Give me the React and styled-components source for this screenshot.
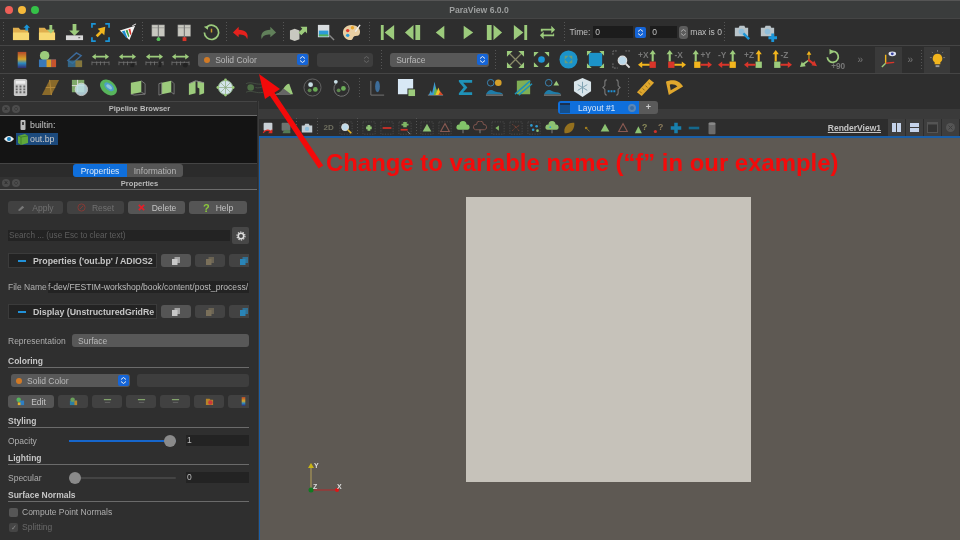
import styled, { createGlobalStyle } from 'styled-components';

const G = '#9ccb7c';
const Y = '#f2b51d';
const R = '#d9352a';
const B = '#1b95d8';

const GlobalStyle = createGlobalStyle`
  html, body { margin: 0; padding: 0; background: #2d2d2d; }
  body { font-family: "Liberation Sans", Arial, sans-serif; overflow: hidden; }
  * { box-sizing: border-box; }
`;

const Window = styled.div`
  position: relative;
  width: 960px;
  height: 540px;
  overflow: hidden;
  display: flex;
  flex-direction: column;
  background: #2d2d2d;
  filter: blur(0.35px);
`;

const TitleBar = styled.div`
  height: 18px;
  flex: none;
  display: flex;
  align-items: center;
  padding-left: 5px;
  gap: 5px;
  background: #3a3c3c;
  border-top: 1px solid #555;
`;

const Light = styled.span`
  width: 8px;
  height: 8px;
  border-radius: 50%;
  background: ${(p) => p.$c};
`;

const TitleText = styled.div`
  flex: 1;
  text-align: center;
  font-size: 8.6px;
  font-weight: 700;
  color: #9d9f9f;
  margin-right: 46px;
`;

const Toolbar = styled.div`
  height: ${(p) => p.$h || 28}px;
  flex: none;
  display: flex;
  align-items: center;
  background: #2e2e2e;
  border-top: 1px solid #454545;
`;

const Sep = styled.div`
  width: ${(p) => p.$w || 4}px;
  height: 20px;
  flex: none;
  background: ${(p) =>
    p.$dots ? 'repeating-linear-gradient(to bottom, #555 0 1px, transparent 1px 3px) center / 1px 100% no-repeat' : 'none'};
`;

const Btn = styled.div`
  width: ${(p) => p.$w || 26.65}px;
  height: ${(p) => p.$h || 26}px;
  flex: none;
  display: flex;
  align-items: center;
  justify-content: center;
  background: ${(p) => p.$bg || 'none'};
  color: #6f6f5f;
  font-size: 8px;
  font-weight: 700;
`;

const Combo = styled.div`
  width: ${(p) => p.$w}px;
  height: ${(p) => p.$h || 13}px;
  flex: none;
  display: flex;
  align-items: center;
  gap: 5px;
  margin-left: ${(p) => p.$ml || 0}px;
  padding-left: ${(p) => p.$pad || 6}px;
  padding-right: 1px;
  border-radius: 3px;
  background: ${(p) => (p.$dim ? '#3e3e3e' : '#585858')};
  color: ${(p) => (p.$dim ? '#6a6a6a' : '#b9b9b9')};
  font-size: 8.5px;
  white-space: nowrap;
  overflow: hidden;
`;

const ComboText = styled.span`
  flex: 1;
`;

const ComboArrow = styled.span`
  width: 11px;
  height: 11px;
  flex: none;
  margin-left: ${(p) => p.$ml || 0}px;
  border-radius: 2px;
  background: ${(p) => (p.$dim ? 'transparent' : '#1565d8')};
  display: flex;
  align-items: center;
  justify-content: center;
`;

const Dot = styled.span`
  width: 6px;
  height: 6px;
  flex: none;
  border-radius: 50%;
  background: #d27a25;
`;

const TimeLabel = styled.span`
  font-size: 8.5px;
  color: #c0c0c0;
  white-space: nowrap;
`;

const NumInput = styled.div`
  width: ${(p) => p.$w}px;
  height: 12px;
  flex: none;
  margin-left: ${(p) => p.$ml || 0}px;
  padding-left: 2px;
  background: #1c1c1c;
  color: #c0c0c0;
  font-size: 8.5px;
  line-height: 12px;
`;

const Stepper = styled.span`
  width: 9px;
  height: 13px;
  flex: none;
  margin: 0 2px;
  border-radius: 3px;
  background: #5d5d5d;
  display: flex;
  align-items: center;
  justify-content: center;
`;

const Chevrons = styled.span`
  color: #777;
  font-size: 10px;
  width: ${(p) => p.$w}px;
  flex: none;
  text-align: center;
`;

const Main = styled.div`
  flex: 1;
  min-height: 0;
  display: flex;
`;

const LeftPanel = styled.div`
  width: 257px;
  flex: none;
  display: flex;
  flex-direction: column;
  background: #2f2f2f;
  border-top: 1px solid #454545;
`;

const DockTitle = styled.div`
  height: ${(p) => p.$h || 14}px;
  flex: none;
  display: flex;
  align-items: center;
  padding-left: 2px;
  gap: 2px;
  background: #323232;
  border-bottom: 1px solid #6c6c6c;
`;

const DockDot = styled.span`
  width: 8px;
  height: 8px;
  flex: none;
  border-radius: 50%;
  background: #4c4c4c;
  color: #222;
  font-size: 7px;
  line-height: 8px;
  text-align: center;
`;

const DockLabel = styled.span`
  flex: 1;
  text-align: center;
  color: #b9b9b9;
  font-size: 7.6px;
  font-weight: 700;
`;

const Pipeline = styled.div`
  height: 47px;
  flex: none;
  background: #141414;
  display: flex;
  flex-direction: column;
  padding: 2px 0 0 4px;
  gap: 1px;
`;

const TreeRow = styled.div`
  height: 13px;
  display: flex;
  align-items: center;
  color: #c8c8c8;
  font-size: 8.8px;
`;

const TreeEye = styled.span`
  width: 12px;
  height: 12px;
  flex: none;
  display: flex;
  align-items: center;
`;

const TreeItem = styled.span`
  height: 12px;
  display: flex;
  align-items: center;
  gap: 1px;
  padding: 0 4px 0 1px;
  background: ${(p) => (p.$selected ? '#1c4a7d' : 'none')};
`;

const Tabs = styled.div`
  height: 14px;
  flex: none;
  display: flex;
  padding-left: 73px;
  background: #2b2b2b;
  border-top: 1px solid #444;
`;

const Tab = styled.div`
  width: ${(p) => p.$w}px;
  height: 13px;
  display: flex;
  align-items: center;
  justify-content: center;
  font-size: 8.5px;
  color: ${(p) => (p.$on ? '#dce9f8' : '#b5b5b5')};
  background: ${(p) => (p.$on ? '#0f6fdc' : '#565656')};
  border-radius: ${(p) => (p.$on ? '3px 0 0 3px' : '0 3px 3px 0')};
`;

const Body = styled.div`
  flex: 1;
  min-height: 0;
  padding: 11px 8px 0;
  overflow: hidden;
`;

const Line = styled.div`
  display: flex;
  align-items: center;
  gap: ${(p) => p.$gap ?? 4}px;
  height: ${(p) => p.$h || 13}px;
  margin-top: ${(p) => p.$mt || 0}px;
  width: 241px;
  overflow: hidden;
  flex: none;
  font-size: 8.5px;
  color: #aeaeae;
  white-space: nowrap;
`;

const PushBtn = styled.div`
  width: ${(p) => p.$w}px;
  height: 13px;
  flex: none;
  display: flex;
  align-items: center;
  justify-content: center;
  gap: 6px;
  border-radius: 3px;
  background: ${(p) => (p.$on ? '#555' : '#414141')};
  color: ${(p) => (p.$on ? '#c4c4c4' : '#717171')};
  font-size: 8.5px;
`;

const HelpMark = styled.span`
  color: #8cc83c;
  font-weight: 700;
  font-size: 11px;
`;

const SearchBox = styled.div`
  width: 222px;
  height: 11px;
  flex: none;
  background: #232323;
  color: #5e5e5e;
  font-size: 8.2px;
  line-height: 11px;
  padding-left: 1px;
`;

const GearBtn = styled.div`
  width: 17px;
  height: 17px;
  flex: none;
  margin-left: 2px;
  background: #474747;
  border-radius: 2px;
  display: flex;
  align-items: center;
  justify-content: center;
`;

const SectionBox = styled.div`
  width: 149px;
  height: 15px;
  flex: none;
  display: flex;
  align-items: center;
  gap: 7px;
  padding-left: 9px;
  background: #232323;
  border: 1px solid #3b3b3b;
  color: #c6c6c6;
  font-size: 8.8px;
  font-weight: 700;
  overflow: hidden;
`;

const Minus = styled.span`
  width: 8px;
  height: 2px;
  flex: none;
  background: #2191d8;
`;

const SectionBtn = styled.div`
  width: 30px;
  height: 13px;
  flex: none;
  border-radius: 3px;
  background: ${(p) => (p.$on ? '#555' : '#434343')};
  display: flex;
  align-items: center;
  justify-content: center;
`;

const FileInput = styled.div`
  flex: 1;
  min-width: 0;
  height: 12px;
  background: #232323;
  color: #bdbdbd;
  font-size: 8.6px;
  line-height: 12px;
  overflow: hidden;
`;

const GroupTitle = styled.div`
  width: 241px;
  height: ${(p) => p.$h || 11}px;
  margin-top: ${(p) => p.$mt || 0}px;
  border-bottom: 1px solid #6b6b6b;
  color: #c6c6c6;
  font-size: 8.5px;
  font-weight: 700;
  line-height: ${(p) => (p.$h || 11) - 2}px;
`;

const PropLabel = styled.span`
  width: ${(p) => p.$w || 61}px;
  flex: none;
`;

const SliderTrack = styled.div`
  position: relative;
  width: 107px;
  height: 2px;
  flex: none;
  background: #444;
  border-radius: 1px;
`;

const SliderFill = styled.div`
  height: 100%;
  background: #1666cc;
`;

const SliderThumb = styled.span`
  position: absolute;
  top: -5px;
  width: 12px;
  height: 12px;
  border-radius: 50%;
  background: #8a8a8a;
`;

const ValueInput = styled.div`
  width: 63px;
  height: 11px;
  flex: none;
  margin-left: 10px;
  background: #232323;
  color: #bdbdbd;
  font-size: 8.5px;
  line-height: 11px;
  padding-left: 1px;
`;

const CheckRow = styled.div`
  display: flex;
  align-items: center;
  gap: 4px;
  height: 12px;
  margin-top: ${(p) => p.$mt || 0}px;
  padding-left: 1px;
  font-size: 8.5px;
  color: ${(p) => (p.$dim ? '#696969' : '#aeaeae')};
`;

const CheckBox = styled.span`
  width: 9px;
  height: 9px;
  flex: none;
  border-radius: 2px;
  background: ${(p) => (p.$dim ? '#454545' : '#565656')};
  color: #888;
  font-size: 7px;
  line-height: 9px;
  text-align: center;
`;

const RightArea = styled.div`
  flex: 1;
  min-width: 0;
  display: flex;
  flex-direction: column;
  border-left: 1px solid #3c3c3c;
  margin-left: 1px;
`;

const TabStrip = styled.div`
  height: 18px;
  flex: none;
  padding-left: 299px;
  display: flex;
  background: linear-gradient(to bottom, #2e2e2e 0 8px, #3a3a3a 8px);
`;

const LayoutTab = styled.div`
  width: 81px;
  height: 13px;
  display: flex;
  align-items: center;
  background: #0f6fdc;
  border-radius: 3px 0 0 3px;
  color: #d5e6fa;
  font-size: 8.5px;
`;

const LayoutIcon = styled.span`
  width: 10px;
  height: 10px;
  margin: 0 8px 0 2px;
  background: #14508f;
  border-top: 2px solid #1a3050;
`;

const LayoutClose = styled.span`
  width: 8px;
  height: 8px;
  margin: 0 3px 0 auto;
  border-radius: 50%;
  border: 2px solid #5d87b5;
  background: #3a6da5;
`;

const PlusTab = styled.div`
  width: 19px;
  height: 13px;
  border-radius: 0 3px 3px 0;
  background: #5a5a5a;
  color: #ccc;
  font-size: 9px;
  font-weight: 700;
  line-height: 13px;
  text-align: center;
`;

const ViewBar = styled.div`
  height: 17px;
  flex: none;
  display: flex;
  align-items: center;
  background: #2d2d2d;
`;

const ViewName = styled.span`
  margin-left: auto;
  margin-right: 7px;
  color: #c4c4c4;
  font-size: 8.5px;
  font-weight: 700;
  text-decoration: underline;
`;

const ViewBtn = styled.div`
  width: 18px;
  height: 17px;
  flex: none;
  background: #3e3e3e;
  border-right: 1px solid #2d2d2d;
  display: flex;
  align-items: center;
  justify-content: center;
`;

const Viewport = styled.div`
  position: relative;
  flex: 1;
  min-height: 0;
  display: flex;
  align-items: center;
  justify-content: center;
  padding-right: 3px;
  background: #5e5953;
  border-top: 2px solid #1a5fa8;
  border-left: 1px solid #1a5fa8;
`;

const Plane = styled.div`
  width: 285px;
  height: 285px;
  background: #c6c2ba;
`;

const AxesMark = styled.svg`
  position: absolute;
  left: 43px;
  top: 322px;
`;

const ArrowMark = styled.svg`
  position: absolute;
  left: 0;
  top: 0;
  pointer-events: none;
`;

const Callout = styled.div`
  position: absolute;
  left: 326px;
  top: 149px;
  color: #f40a0a;
  font-size: 23.9px;
  font-weight: 700;
  white-space: nowrap;
`;

function Ic({ s = 19, box = 20, children }) {
  return (
    <svg width={s} height={s} viewBox={`0 0 ${box} ${box}`}>
      {children}
    </svg>
  );
}

function Folder({ children }) {
  return (
    <>
      <path d="M1 5h6l2 2h8v11H1z" fill="#dfae4e" />
      <path d="M1 10h17v8H1z" fill="#f7d873" />
      {children}
    </>
  );
}

function Server({ x = 3, y = 2 }) {
  return (
    <g fill="#c8c8c0" stroke="#777" strokeWidth=".5">
      <rect x={x} y={y} width="6.5" height="12" />
      <rect x={x + 7} y={y} width="6.5" height="12" />
      <path d={`M${x} ${y + 3}h6.5M${x + 7} ${y + 3}h6.5`} />
    </g>
  );
}

function Rescale({ tail }) {
  return (
    <>
      <path d="M1 7l4-3v2h10V4l4 3-4 3V8H5v2z" fill={G} />
      <path d="M1 13h18M1 12v4M6 12v4M10 12v4M14 12v4M19 12v4" stroke="#777" strokeWidth=".8" fill="none" />
      {tail}
    </>
  );
}

function Axis({ label, square, up, side, left, labelLeft }) {
  const sx = left ? 3 : 11;
  return (
    <Ic s={21}>
      <path d={`M${sx + 3} 12V5h-2l3-4 3 4h-2v7z`} transform={`translate(${left ? -2.5 : -1},0)`} fill={up} />
      <rect x={sx} y="12" width="6" height="6" fill={square} />
      {left ? (
        <path d="M9 14h7v-2l4 3-4 3v-2H9z" fill={side} />
      ) : (
        <path d="M11 14H4v-2l-4 3 4 3v-2h7z" fill={side} />
      )}
      <text x={labelLeft ? 0 : 9} y="9" fontSize="8" fill="#777" fontFamily="Liberation Sans">{label}</text>
    </Ic>
  );
}

function Box({ fill = G, wire = '#888' }) {
  return (
    <>
      <path d="M3 5l11-2v12L3 17z" fill={fill} />
      <path d="M14 3l4 3v11l-4-2M3 17l4 1 11-1" fill="none" stroke={wire} strokeWidth=".8" />
    </>
  );
}

function Updown({ c = '#eee' }) {
  return (
    <svg width="7" height="9" viewBox="0 0 7 9">
      <path d="M1 3.500l2.500-2 2.500 2M1 5.500l2.500 2 2.500-2" fill="none" stroke={c} strokeWidth="1" />
    </svg>
  );
}

const row1a = [
  <Ic><Folder><path d="M12 5l3.500-3.500L19 5h-2v3h-3V5z" fill={B} /></Folder></Ic>,
  <Ic><Folder><path d="M12 2h3v5h2.500l-4 4-4-4H12z" fill={G} /></Folder></Ic>,
  <Ic><path d="M8 1h4v7h3.500L10 13.500 4.500 8H8z" fill={G} /><rect x="1" y="13" width="18" height="5" fill="#d9d9d9" /><rect x="14" y="15" width="2" height="1" fill="#555" /></Ic>,
  <Ic><path d="M1 5V1h4M15 1h4v4M19 15v4h-4M5 19H1v-4" stroke={B} strokeWidth="1.800" fill="none" /><path d="M15 4l-1 9-2.500-2.500L7 15l-2-2 4.500-4.500L7 6z" fill={Y} /></Ic>,
  <Ic><path d="M2 8L18 3l-6 15z" fill="#f4f4f4" /><path d="M4 9l3-1 3 8-2-1z" fill="#1c8ad0" /><path d="M8 8l2-1 2 7-1 1z" fill="#3b9d45" /><path d="M11 6.500l2-.500 1 5-1 2z" fill="#d8322a" /><path d="M15 3l4-2" stroke="#eee" /></Ic>,
];

const row1b = [
  <Ic><Server /><path d="M10 14v3" stroke="#888" /><circle cx="10" cy="17" r="2" fill="#58c15a" /></Ic>,
  <Ic><Server /><path d="M10 14v3" stroke="#888" /><rect x="8" y="15" width="4" height="4" fill={R} /></Ic>,
  <Ic><path d="M6 3.500A7.500 7.500 0 1 1 2.500 10" fill="none" stroke={G} strokeWidth="1.800" /><path d="M2 4l5-1.500L6 7z" fill={G} /><path d="M10 6v4" stroke="#c99b2a" strokeWidth="1.500" /></Ic>,
];

const row1c = [
  <Ic><path d="M7 4L1 10l6 5v-3c5 0 8 1 9 5 2-6-2-10-9-10z" fill="#e5211d" /></Ic>,
  <Ic><path d="M13 4l6 6-6 5v-3c-5 0-8 1-9 5-2-6 2-10 9-10z" fill="#61805a" /></Ic>,
];

const row1d = [
  <Ic><path d="M1 8l5-2 5 2v9l-5 2-5-2z" fill="#c8c8c0" /><path d="M10 10l4-4-2-2h7v7l-2-2-4 4z" fill={G} /></Ic>,
  <Ic><rect x="2" y="2" width="12" height="13" fill="#d9dde0" /><rect x="3" y="8" width="10" height="6" fill="#2d9bd8" /><rect x="3" y="12" width="10" height="2" fill="#52b05a" /><path d="M14 13l5 5" stroke="#888" strokeWidth="1.500" /></Ic>,
  <Ic><path d="M10 2C4 2 1 6 1 10s3 8 8 8c3 0 2-3 4-4s6 1 6-5c0-4-4-7-9-7z" fill="#e9cfa2" /><circle cx="6" cy="8" r="1.800" fill="#e23b2d" /><circle cx="6" cy="13" r="1.800" fill="#2d9bd8" /><circle cx="11" cy="5" r="1.800" fill="#e8a52a" /><path d="M14 9l5-7" stroke="#eee" strokeWidth="1.500" /></Ic>,
];

const vcr = [
  'M3 2h3v16H3zM17 2v16L7 10z',
  'M10 2v16L1 10zM12 2h5v16h-5z',
  'M14 3v14L5 10z',
  'M6 3v14l10-7z',
  'M3 2h5v16H3zM10 2l9 8-9 8z',
  'M3 2l10 8-10 8zM14 2h3v16h-3z',
];

const row2a = [
  <Ic><defs><linearGradient id="cb" x1="0" y1="0" x2="0" y2="1"><stop offset="0" stopColor="#b5482a" /><stop offset=".45" stopColor="#d5a62a" /><stop offset=".7" stopColor="#2c8ac0" /><stop offset="1" stopColor="#302a70" /></linearGradient></defs><rect x="6" y="2" width="9" height="17" fill="url(#cb)" /></Ic>,
  <Ic><circle cx="7" cy="6" r="5" fill={G} /><rect x="1" y="10" width="18" height="8" fill="#3878b8" /><rect x="9" y="10" width="5" height="8" fill="#d8a02a" /><rect x="14" y="10" width="5" height="8" fill="#c7532d" /></Ic>,
  <Ic><path d="M3 11l9-8 5 3-9 8z" fill="none" stroke="#3c6a9a" strokeWidth="1.500" /><rect x="3" y="11" width="15" height="7" fill="#35729a" opacity=".8" /><rect x="11" y="11" width="7" height="7" fill="#9a7a2a" opacity=".8" /></Ic>,
  <Ic><Rescale /></Ic>,
  <Ic><Rescale tail={<path d="M13 14h4v4h-4z" fill="#222" />} /></Ic>,
  <Ic><Rescale tail={<path d="M14 12h3v6h-3z" fill="#222" />} /></Ic>,
  <Ic><Rescale tail={<circle cx="15" cy="16" r="2.500" fill="#222" />} /></Ic>,
];

const row2b = [
  <Ic><path d="M4 4l12 12M16 4L4 16" stroke="#8a8a6a" strokeWidth="1.300" /><path d="M1 1h6L1 7zM19 1v6l-6-6zM1 19v-6l6 6zM19 19h-6l6-6z" fill={G} /></Ic>,
  <Ic><circle cx="10" cy="10" r="3.500" fill={B} /><path d="M2 2h5L2 7zM18 2v5l-5-5zM2 18v-5l5 5zM18 18h-5l5-5z" fill={G} /></Ic>,
  <Ic><circle cx="10" cy="10" r="9.500" fill="#1c93c9" /><path d="M6 6h4L6 10zM14 6v4l-4-4zM6 14v-4l4 4zM14 14h-4l4-4z" fill="#6d9c78" /></Ic>,
  <Ic><rect x="3" y="3" width="14" height="14" fill="#1c93c9" /><path d="M1 1h5L1 6zM19 1v5l-5-5zM1 19v-5l5 5zM19 19h-5l5-5z" fill={G} /></Ic>,
  <Ic><path d="M1 5V1h5M14 1h5M1 14v5h5" fill="none" stroke="#777" strokeDasharray="2 1" /><circle cx="11" cy="11" r="4.500" fill="#bcd9ea" stroke="#ddd" strokeWidth="1.200" /><path d="M14.500 14.500l4 4" stroke="#ddd" strokeWidth="2" /></Ic>,
  <Axis label="+X" square={R} up={G} side={Y} labelLeft />,
  <Axis label="-X" square={R} up={G} side={Y} left />,
  <Axis label="+Y" square={Y} up={G} side={R} left />,
  <Axis label="-Y" square={Y} up={G} side={R} labelLeft />,
  <Axis label="+Z" square={G} up={Y} side={R} labelLeft />,
  <Axis label="-Z" square={G} up={Y} side={R} left />,
  <Ic><path d="M10 10V5H8l2.500-4L13 5h-2v5z" fill={Y} /><path d="M10 10l-6 4-1-2-2 6 6-1-1-2 5-4z" fill={G} /><path d="M10 9l5 4 1-2 3 6-6-1 1-1-5-4z" fill={R} /></Ic>,
  <Ic s={22}><path d="M6 2.500A5 5 0 1 1 3 7.500" fill="none" stroke={G} strokeWidth="1.600" /><path d="M5 0l4.500 2.500L5 5z" fill={G} /><text x="6.500" y="18.500" fontSize="7.500" fill="#777" fontFamily="Liberation Sans">+90</text></Ic>,
];

const row3a = [
  <Ic><rect x="3" y="1" width="14" height="18" rx="2" fill="#c9c9c9" /><rect x="5" y="3" width="10" height="3" fill="#eee" /><path d="M5 8h2v2H5zM9 8h2v2H9zM13 8h2v2h-2zM5 11h2v2H5zM9 11h2v2H9zM13 11h2v2h-2zM5 14h2v2H5zM9 14h2v2H9zM13 14h2v2h-2z" fill="#666" /></Ic>,
  <Ic><path d="M9 2h10l-8 16H1z" fill="#8a6a2a" /><path d="M9 2l2 16M5 10h10" stroke="#b58a3a" /></Ic>,
  <Ic><rect x="2" y="2" width="13" height="13" fill="#7ea86a" /><path d="M2 8h13M8 2v13" stroke="#ddd" /><circle cx="12" cy="12" r="6.500" fill="#bfe1ea" opacity=".85" stroke="#ddd" /></Ic>,
  <Ic><ellipse cx="10" cy="10" rx="10" ry="7" transform="rotate(40 10 10)" fill="#58b55c" /><ellipse cx="10" cy="9" rx="6" ry="3.500" transform="rotate(40 10 10)" fill="#4ea0c9" /><ellipse cx="10" cy="9" rx="3.500" ry="1.800" transform="rotate(40 10 10)" fill="#8fc5dc" /></Ic>,
  <Ic><Box /></Ic>,
  <Ic><path d="M5 5l10-2v12L5 17z" fill={G} /><path d="M2 6l3-1v12l-3 1zM15 3l3 3v11l-3-2" fill="none" stroke="#888" strokeWidth=".8" /></Ic>,
  <Ic><path d="M2 6l7-3v13l-7 2z" fill={G} /><path d="M11 3l7 2v11l-5 2v-7l-2-1z" fill={G} /><path d="M2 6l7-3 9 2" fill="none" stroke="#888" /></Ic>,
  <Ic><circle cx="10" cy="10" r="7.500" fill="#d3e4ea" stroke="#8fb28a" /><path d="M2.500 10h15M10 2.500v15M5 5l10 10M15 5L5 15" stroke="#86a878" strokeWidth=".7" /><circle cx="10" cy="2" r="1.500" fill={G} /><circle cx="10" cy="18" r="1.500" fill={G} /><circle cx="2" cy="10" r="1.500" fill={G} /><circle cx="18" cy="10" r="1.500" fill={G} /></Ic>,
  <Ic><circle cx="6" cy="10" r="3.500" fill="#4d6d44" /><path d="M1 6c6-3 11 2 18 0M11 10c3 1 5 0 8-1M1 15c6-3 11 2 18 0" fill="none" stroke="#454f42" /></Ic>,
  <Ic><path d="M0 17c5 0 8-3 10-6s4-5 6-5l4 11z" fill={G} /><path d="M0 17c5 0 8-3 10-6l9 7H0z" fill="#666" /></Ic>,
  <Ic><circle cx="10" cy="10" r="9" fill="none" stroke="#666" /><circle cx="8" cy="7" r="2.500" fill="#c9dfe6" /><circle cx="13" cy="12" r="2.500" fill="#6bae58" /><circle cx="7" cy="13" r="2" fill="#5e8a4e" /></Ic>,
  <Ic><path d="M12 3.500A8 8 0 1 1 4 6" fill="none" stroke="#777" /><circle cx="4" cy="4" r="2" fill="#c9dfe6" /><circle cx="12" cy="11" r="2.500" fill="#6bae58" /><circle cx="7" cy="13" r="2" fill="#5e8a4e" /></Ic>,
];

const row3b = [
  <Ic><path d="M3 3v15h14" stroke="#777" fill="none" /><ellipse cx="10" cy="9" rx="2.500" ry="6" fill="#3d6d9a" /></Ic>,
  <Ic><path d="M1 1h16v10h-6v6H1z" fill="#d8e8f5" /><rect x="12" y="12" width="7" height="7" fill={G} /></Ic>,
  <Ic><path d="M2 18h16" stroke="#888" /><path d="M3 18l2-5 2 5zM6 18l3-14 3 14z" fill="#3f9bd1" /><path d="M8 18l2-9 3 9z" fill="#67b84d" /><path d="M10 18l3-8 3 8z" fill="#f0c32b" /><path d="M13 18l2-4 3 4z" fill="#d84a2a" /></Ic>,
  <Ic><path d="M3 2h14v3H7.500L12 10l-4.500 5H17v3H3v-2l5-6-5-6z" fill="#1f92b8" /></Ic>,
  <Ic><circle cx="6" cy="5" r="3.500" fill="none" stroke="#3c87b5" /><circle cx="14" cy="5" r="3.500" fill="#d5a02a" /><path d="M1 17c3-5 5-5 9-3s6 0 9 3z" fill="#1f7ca8" /><path d="M1 18h18" stroke="#999" /></Ic>,
  <Ic><path d="M3 3l14-1v15H3z" fill="#7fae55" /><path d="M1 17L17 3M5 18L19 6" stroke="#1f92b8" strokeWidth="1.500" /></Ic>,
  <Ic><circle cx="6" cy="5" r="3.500" fill="none" stroke="#3c87b5" /><path d="M11 8l3-5 3 5z" fill={G} /><path d="M1 17c3-5 5-5 9-3s6 0 9 3z" fill="#1f7ca8" /><path d="M1 18h18" stroke="#999" /></Ic>,
  <Ic><path d="M10 0l9 4v10l-9 6-9-6V4z" fill="#d8e4ea" /><path d="M10 4v12M5 7l10 6M15 7L5 13" stroke="#7ca0b0" /></Ic>,
  <Ic><path d="M5 2c-2 0-2 1-2 3v3l-2 2 2 2v3c0 2 0 3 2 3M15 2c2 0 2 1 2 3v3l2 2-2 2v3c0 2 0 3-2 3" fill="none" stroke="#777" strokeWidth="1.200" /><path d="M6 13h2v2H6zM9 13h2v2H9zM12 13h2v2h-2z" fill="#1f92d8" /></Ic>,
];

const row3c = [
  <Ic><path d="M14 1l5 4L6 19l-5-4z" fill="#e0a72d" /><path d="M13 5l2 2M10 8l2 2M7 11l2 2M4 14l2 2" stroke="#8a6a1a" /></Ic>,
  <Ic><path d="M4 18L1 4c6-3 14-2 18 5z" fill="#e0a72d" /><path d="M6 13L5 7c3-1 6 0 8 2z" fill="#2e2e2e" /></Ic>,
];

const sel = <path d="M1 1h14v14H1z" fill="none" stroke="#555" strokeDasharray="1.500 1.500" strokeWidth=".8" />;
const Tri = ({ c = '#8cc272' }) => <path d="M8 3l5 9H3z" fill={c} />;
const Out = ({ c = '#a05a50' }) => <path d="M8 3l5 9H3z" fill="none" stroke={c} strokeWidth="1.200" />;
const viewIcons1 = [
  <Ic s={14} box={16}>{sel}<path d="M6 4h4v2h2v4h-2v2H6v-2H4V6h2z" fill="#8cc272" transform="translate(1.500 1.500) scale(.8)" /></Ic>,
  <Ic s={14} box={16}>{sel}<rect x="3" y="7" width="10" height="2" fill="#d03028" /></Ic>,
  <Ic s={14} box={16}>{sel}<path d="M6 1h4v2h2v2h-2v2H6V5H4V3h2z" fill="#7fb565" /><rect x="3" y="9" width="8" height="2" fill="#d03028" /><path d="M11 12l3 3" stroke="#999" /></Ic>,
];
const viewIcons2 = [
  <Ic s={14} box={16}>{sel}<Tri /></Ic>,
  <Ic s={14} box={16}>{sel}<Out c="#8a5a52" /></Ic>,
  <Ic s={14} box={16}><path d="M3 10a3 3 0 0 1 1-6 4 4 0 0 1 8 0 3 3 0 0 1 1 6z" fill="#82c46a" /><path d="M8 10v4" stroke="#888" /></Ic>,
  <Ic s={14} box={16}><path d="M3 10a3 3 0 0 1 1-6 4 4 0 0 1 8 0 3 3 0 0 1 1 6z" fill="none" stroke="#8a5a52" /><path d="M8 10v4" stroke="#888" /></Ic>,
  <Ic s={14} box={16}>{sel}<path d="M9 5l-4 3 4 3z" fill="#7fb565" /></Ic>,
  <Ic s={14} box={16}>{sel}<path d="M4 4l4 3 4-2M4 11l4-4 4 5" fill="none" stroke="#a0503c" strokeDasharray="1 1" /></Ic>,
  <Ic s={14} box={16}>{sel}<circle cx="5" cy="5" r="1.500" fill="#2f9bd0" /><circle cx="11" cy="6" r="1.500" fill="#2f9bd0" /><circle cx="7" cy="10" r="1.500" fill="#2f9bd0" /><circle cx="12" cy="11" r="1.500" fill="#8cc272" /></Ic>,
  <Ic s={14} box={16}><path d="M3 10a3 3 0 0 1 1-6 4 4 0 0 1 8 0 3 3 0 0 1 1 6z" fill="#8cc272" /><circle cx="6" cy="7" r="1" fill="#2f9bd0" /><path d="M8 10v4" stroke="#888" /></Ic>,
  <Ic s={14} box={16}><path d="M3 14C1 7 7 1 14 2c1 7-4 13-11 12z" fill="#94701e" /></Ic>,
  <Ic s={14} box={16}><path d="M6 7l5 5" stroke="#8a7a2a" /><circle cx="7" cy="8" r="1.500" fill="#a07c1e" /></Ic>,
  <Ic s={14} box={16}><Tri /></Ic>,
  <Ic s={14} box={16}><Out c="#8a5a52" /></Ic>,
  <Ic s={14} box={16}><path d="M5 6l4 8H1z" fill="#8cc272" /><text x="9" y="10" fontSize="10" fill="#8a8a5a" fontFamily="Liberation Sans">?</text></Ic>,
  <Ic s={14} box={16}><circle cx="5" cy="12" r="1.800" fill="#d03028" /><text x="8" y="10" fontSize="10" fill="#8a7a5a" fontFamily="Liberation Sans">?</text></Ic>,
  <Ic s={14} box={16}><path d="M6 2h4v4h4v4h-4v4H6v-4H2V6h4z" fill="#1880ad" /></Ic>,
  <Ic s={14} box={16}><rect x="2" y="6.500" width="12" height="3" fill="#15688c" /></Ic>,
  <Ic s={14} box={16}><path d="M4 3h8v11a1 1 0 0 1-1 1H5a1 1 0 0 1-1-1z" fill="#6c6c6c" /><ellipse cx="8" cy="3" rx="4" ry="1.500" fill="#888" /></Ic>,
];

const Copy = ({ c = '#c8c8c8' }) => (
  <Ic s={10} box={10}>
    <rect x="1" y="3" width="5.500" height="6" fill={c} />
    <rect x="3.500" y="1" width="5.500" height="6" fill={c} opacity=".7" />
  </Ic>
);

const Eye = () => (
  <Ic s={10} box={10}>
    <path d="M0 5c3-4 7-4 10 0-3 4-7 4-10 0z" fill="#e8eef2" />
    <circle cx="5" cy="5" r="2" fill="#1782c0" />
  </Ic>
);

const Camera = ({ children }) => (
  <Ic>
    <path d="M3 5h4l1-2h5l1 2h3v9H3z" fill="#b9c4c9" />
    <circle cx="10" cy="9" r="3" fill="#8fbfdc" />
    {children}
  </Ic>
);

function Slider({ value }) {
  return (
    <SliderTrack>
      <SliderFill style={{ width: `${value * 100}%` }} />
      <SliderThumb style={{ left: value * 95 }} />
    </SliderTrack>
  );
}

export default function App() {
  return (
    <>
      <GlobalStyle />
      <Window>
        <TitleBar>
          <Light $c="#ee5f57" />
          <Light $c="#f5b93a" />
          <Light $c="#35c248" />
          <TitleText>ParaView 6.0.0</TitleText>
        </TitleBar>

        <Toolbar $h={27}>
          <Sep $w={7.7} $dots />
          {row1a.map((i, n) => <Btn key={n}>{i}</Btn>)}
          <Sep $dots />
          {row1b.map((i, n) => <Btn key={n}>{i}</Btn>)}
          <Sep $w={3.2} $dots />
          {row1c.map((i, n) => <Btn key={n}>{i}</Btn>)}
          <Sep $dots />
          {row1d.map((i, n) => <Btn key={n}>{i}</Btn>)}
          <Sep $w={8.7} $dots />
          {vcr.map((d, n) => (
            <Btn key={n}><Ic><path d={d} fill={G} /></Ic></Btn>
          ))}
          <Btn>
            <Ic><path d="M3 9V6h11V3l4 4-4 4V8H5v1zM17 11v3H6v3l-4-4 4-4v3h10v-1z" fill={G} /></Ic>
          </Btn>
          <Sep $w={9} $dots />
          <TimeLabel>Time:</TimeLabel>
          <NumInput $w={40} $ml={3}>0</NumInput>
          <ComboArrow $ml={2}><Updown /></ComboArrow>
          <NumInput $w={27} $ml={4}>0</NumInput>
          <Stepper><Updown c="#aaa" /></Stepper>
          <TimeLabel>max is 0</TimeLabel>
          <Sep $w={6} $dots />
          <Btn><Camera><path d="M12 11l6 6" stroke={B} strokeWidth="2.500" /></Camera></Btn>
          <Btn><Camera><path d="M14 11h3v3h3v3h-3v3h-3v-3h-3v-3h3z" fill={B} /></Camera></Btn>
        </Toolbar>

        <Toolbar>
          <Sep $w={7.7} $dots />
          {row2a.map((i, n) => <Btn key={n}>{i}</Btn>)}
          <Sep />
          <Combo $w={111} $h={14}>
            <Dot />
            <ComboText>Solid Color</ComboText>
            <ComboArrow><Updown /></ComboArrow>
          </Combo>
          <Sep $w={8} />
          <Combo $w={56} $h={14} $dim>
            <ComboText />
            <ComboArrow $dim><Updown c="#666" /></ComboArrow>
          </Combo>
          <Sep $w={17} $dots />
          <Combo $w={99} $h={14}>
            <ComboText>Surface</ComboText>
            <ComboArrow><Updown /></ComboArrow>
          </Combo>
          <Sep $w={12.7} $dots />
          {row2b.map((i, n) => <Btn key={n}>{i}</Btn>)}
          <Chevrons $w={24}>»</Chevrons>
          <Sep $w={3} />
          <Btn $w={27} $bg="#3a3a3a">
            <Ic>
              <path d="M7 14V5" stroke={Y} strokeWidth="1.500" />
              <path d="M7 14l9-1" stroke={R} strokeWidth="1.500" />
              <path d="M7 14l-4 4" stroke={G} strokeWidth="1.500" />
              <ellipse cx="14" cy="4" rx="4" ry="2.500" fill="#dfe3f2" />
              <circle cx="14" cy="4" r="1.500" fill="#3a43a0" />
            </Ic>
          </Btn>
          <Chevrons $w={16}>»</Chevrons>
          <Sep $w={6} $dots />
          <Btn $w={26} $bg="#3a3a3a">
            <Ic>
              <path d="M10 4a5 5 0 0 1 3 9v2H7v-2a5 5 0 0 1 3-9z" fill={Y} />
              <rect x="8" y="16" width="4" height="2" fill="#999" />
              <path d="M10 0v2M2 8h2M16 8h2M4 2l1 1M16 2l-1 1" stroke="#777" />
            </Ic>
          </Btn>
        </Toolbar>

        <Toolbar>
          <Sep $w={6.300} $dots />
          {row3a.map((i, n) => <Btn key={n} $w={29.2}>{i}</Btn>)}
          <Sep $w={6} $dots />
          {row3b.map((i, n) => <Btn key={n} $w={29.3}>{i}</Btn>)}
          <Sep $w={4} $dots />
          {row3c.map((i, n) => <Btn key={n} $w={29.6}>{i}</Btn>)}
        </Toolbar>

        <Main>
          <LeftPanel>
            <DockTitle>
              <DockDot>×</DockDot>
              <DockDot>○</DockDot>
              <DockLabel>Pipeline Browser</DockLabel>
            </DockTitle>
            <Pipeline>
              <TreeRow>
                <TreeEye />
                <TreeItem>
                  <Ic s={12} box={12}><rect x="3.500" y="1" width="5" height="10" rx="1" fill="#bbb" /><rect x="5" y="3" width="2" height="3" fill="#444" /></Ic>
                  builtin:
                </TreeItem>
              </TreeRow>
              <TreeRow>
                <TreeEye><Eye /></TreeEye>
                <TreeItem $selected>
                  <Ic s={12} box={12}><path d="M1 3l7-2 3 2v7l-7 2-3-2z" fill="#5fa83a" /><path d="M4 4v8M4 4L1 3M4 4l7-1" stroke="#2e6a24" strokeWidth=".6" /></Ic>
                  out.bp
                </TreeItem>
              </TreeRow>
            </Pipeline>
            <Tabs>
              <Tab $w={54} $on>Properties</Tab>
              <Tab $w={56}>Information</Tab>
            </Tabs>
            <DockTitle $h={13}>
              <DockDot>×</DockDot>
              <DockDot>○</DockDot>
              <DockLabel>Properties</DockLabel>
            </DockTitle>
            <Body>
              <Line>
                <PushBtn $w={55}>
                  <Ic s={9} box={10}><path d="M1 8l5-5 2 2-5 4z" fill="#777" /></Ic>
                  Apply
                </PushBtn>
                <PushBtn $w={57}>
                  <Ic s={9} box={10}><circle cx="5" cy="5" r="4" fill="none" stroke="#8a3a34" /><path d="M3 7l4-4" stroke="#8a3a34" /></Ic>
                  Reset
                </PushBtn>
                <PushBtn $w={57} $on>
                  <Ic s={9} box={10}><path d="M2 2l6 6M8 2L2 8" stroke="#e0202a" strokeWidth="2" /></Ic>
                  Delete
                </PushBtn>
                <PushBtn $w={58} $on>
                  <HelpMark>?</HelpMark>
                  Help
                </PushBtn>
              </Line>
              <Line $h={17} $mt={13} $gap={0}>
                <SearchBox>Search ... (use Esc to clear text)</SearchBox>
                <GearBtn>
                  <Ic s={10} box={10}><circle cx="5" cy="5" r="2.700" fill="none" stroke="#ddd" strokeWidth="1.500" /><circle cx="5" cy="5" r="4" fill="none" stroke="#ddd" strokeWidth="1.200" strokeDasharray="1.300 1.200" /></Ic>
                </GearBtn>
              </Line>
              <Line $h={15} $mt={9}>
                <SectionBox><Minus />Properties ('out.bp' / ADIOS2</SectionBox>
                <SectionBtn $on><Copy /></SectionBtn>
                <SectionBtn><Copy c="#7a705a" /></SectionBtn>
                <SectionBtn><Copy c="#2a85b8" /></SectionBtn>
              </Line>
              <Line $mt={12} $h={14} $gap={0}>
                <PropLabel $w={40}>File Name</PropLabel>
                <FileInput>f-dev/FESTIM-workshop/book/content/post_process/</FileInput>
              </Line>
              <Line $h={15} $mt={10}>
                <SectionBox><Minus />Display (UnstructuredGridRe</SectionBox>
                <SectionBtn $on><Copy /></SectionBtn>
                <SectionBtn><Copy c="#7a705a" /></SectionBtn>
                <SectionBtn><Copy c="#2a85b8" /></SectionBtn>
              </Line>
              <Line $mt={15} $gap={0}>
                <PropLabel $w={64}>Representation</PropLabel>
                <Combo $w={177}>Surface</Combo>
              </Line>
              <GroupTitle $mt={10}>Coloring</GroupTitle>
              <Line $mt={6} $gap={7}>
                <Combo $w={119} $pad={5} $ml={3}>
                  <Dot />
                  <ComboText>Solid Color</ComboText>
                  <ComboArrow><Updown /></ComboArrow>
                </Combo>
                <Combo $w={112} $dim />
              </Line>
              <Line $mt={8}>
                <PushBtn $w={46} $on>
                  <Ic s={9} box={10}><circle cx="3" cy="3" r="2.500" fill="#58b55c" /><rect x="4" y="4" width="5" height="5" fill="#2d7fc4" /><rect x="2" y="6" width="3" height="3" fill="#e5b52a" /></Ic>
                  Edit
                </PushBtn>
                <PushBtn $w={30}><Ic s={9} box={10}><rect x="1" y="4" width="8" height="5" fill="#2d7fa4" /><circle cx="4" cy="3" r="2.500" fill="#6ba05c" /><rect x="6" y="4" width="3" height="5" fill="#b5852a" /></Ic></PushBtn>
                <PushBtn $w={30}><Ic s={9} box={10}><path d="M1 3h8" stroke={G} /><path d="M2 6h6" stroke="#666" /></Ic></PushBtn>
                <PushBtn $w={30}><Ic s={9} box={10}><path d="M1 3h8" stroke={G} /><path d="M2 6h6" stroke="#666" /></Ic></PushBtn>
                <PushBtn $w={30}><Ic s={9} box={10}><path d="M1 3h8" stroke={G} /><path d="M2 6h6" stroke="#666" /></Ic></PushBtn>
                <PushBtn $w={30}><Ic s={9} box={10}><path d="M1 2h4l1 1h3v6H1z" fill="#b5852a" /><circle cx="6" cy="6" r="2.500" fill="#c93a3a" /></Ic></PushBtn>
                <PushBtn $w={30}><Ic s={9} box={10}><rect x="3" y="0" width="4" height="10" fill="url(#cb)" /></Ic></PushBtn>
              </Line>
              <GroupTitle $mt={9}>Styling</GroupTitle>
              <Line $mt={6} $gap={0}>
                <PropLabel>Opacity</PropLabel>
                <Slider value={1} />
                <ValueInput>1</ValueInput>
              </Line>
              <GroupTitle $mt={6} $h={12}>Lighting</GroupTitle>
              <Line $mt={6} $gap={0}>
                <PropLabel>Specular</PropLabel>
                <Slider value={0} />
                <ValueInput>0</ValueInput>
              </Line>
              <GroupTitle $mt={6} $h={12}>Surface Normals</GroupTitle>
              <CheckRow $mt={4}><CheckBox />Compute Point Normals</CheckRow>
              <CheckRow $mt={3} $dim><CheckBox $dim>✓</CheckBox>Splitting</CheckRow>
            </Body>
          </LeftPanel>

          <RightArea>
            <TabStrip>
              <LayoutTab>
                <LayoutIcon />
                Layout #1
                <LayoutClose />
              </LayoutTab>
              <PlusTab>+</PlusTab>
            </TabStrip>
            <ViewBar>
              <Btn $w={17.8} $h={17}>
                <Ic s={14} box={16}><rect x="3" y="2" width="10" height="9" rx="1" fill="#c9d0d6" /><path d="M2 13c3-4 7-4 9-2l2-2v5H8l2-2c-2-1-5-1-7 2z" fill="#e02a22" /></Ic>
              </Btn>
              <Btn $w={17.8} $h={17}>
                <Ic s={14} box={16}><rect x="3" y="2" width="10" height="9" rx="1" fill="#6d7470" /><path d="M4 14c1-4 5-5 9-3v3z" fill="#557a55" /></Ic>
              </Btn>
              <Sep $w={3.2} $dots />
              <Btn $w={17.8} $h={17}>
                <Ic s={14} box={16}><path d="M2 5h3l1-2h4l1 2h3v8H2z" fill="#c2ccd2" /><circle cx="8" cy="9" r="2.500" fill="#8fbfdc" /></Ic>
              </Btn>
              <Sep $w={4.2} $dots />
              <Btn $w={17.8} $h={17}>2D</Btn>
              <Btn $w={17.8} $h={17}>
                <Ic s={14} box={16}>{sel}<circle cx="7" cy="7" r="4" fill="#bcd9ea" stroke="#ddd" /><path d="M10 10l4 4" stroke="#e0b52a" strokeWidth="2" /></Ic>
              </Btn>
              <Sep $w={5.2} $dots />
              {viewIcons1.map((i, n) => <Btn key={n} $w={17.8} $h={17}>{i}</Btn>)}
              <Sep $w={4.2} $dots />
              {viewIcons2.map((i, n) => <Btn key={n} $w={17.8} $h={17}>{i}</Btn>)}
              <ViewName>RenderView1</ViewName>
              <ViewBtn><Ic s={11} box={11}><rect x="1" y="1" width="4" height="9" fill="#c5d3ea" /><rect x="6" y="1" width="4" height="9" fill="#c5d3ea" /></Ic></ViewBtn>
              <ViewBtn><Ic s={11} box={11}><rect x="1" y="1" width="9" height="4" fill="#c5d3ea" /><rect x="1" y="6" width="9" height="4" fill="#c5d3ea" /></Ic></ViewBtn>
              <ViewBtn><Ic s={11} box={11}><rect x=".5" y=".5" width="10" height="10" fill="#333" stroke="#555" /><rect x=".5" y=".5" width="10" height="2" fill="#555" /></Ic></ViewBtn>
              <ViewBtn><Ic s={11} box={11}><circle cx="5.500" cy="5.500" r="4.500" fill="#555" /><path d="M3.500 3.500l4 4M7.500 3.500l-4 4" stroke="#3e3e3e" /></Ic></ViewBtn>
            </ViewBar>
            <Viewport>
              <Plane />
              <AxesMark width="46" height="36" viewBox="0 0 46 36">
                <path d="M8 30V6" stroke="#8a7d55" strokeWidth="2" />
                <path d="M8 30h26" stroke="#b5282a" strokeWidth="1" />
                <circle cx="8" cy="30" r="2.500" fill="#117a22" />
                <path d="M5 8l3-5 3 5z" fill="#c9b515" />
                <circle cx="34" cy="30" r="2" fill="#e01515" />
                <text x="11" y="8" fontSize="7" fontWeight="700" fill="#ddd" fontFamily="Liberation Sans">Y</text>
                <text x="10" y="29" fontSize="7" fontWeight="700" fill="#ddd" fontFamily="Liberation Sans">Z</text>
                <text x="34" y="29" fontSize="7" fontWeight="700" fill="#ddd" fontFamily="Liberation Sans">X</text>
              </AxesMark>
            </Viewport>
          </RightArea>
        </Main>

        <ArrowMark width="960" height="540" viewBox="0 0 960 540">
          <path d="M321 167L270 91" stroke="#f40a0a" strokeWidth="5.500" fill="none" />
          <path d="M259 74L280 89 265 99z" fill="#f40a0a" />
        </ArrowMark>
        <Callout>Change to variable name (“f” in our example)</Callout>
      </Window>
    </>
  );
}
